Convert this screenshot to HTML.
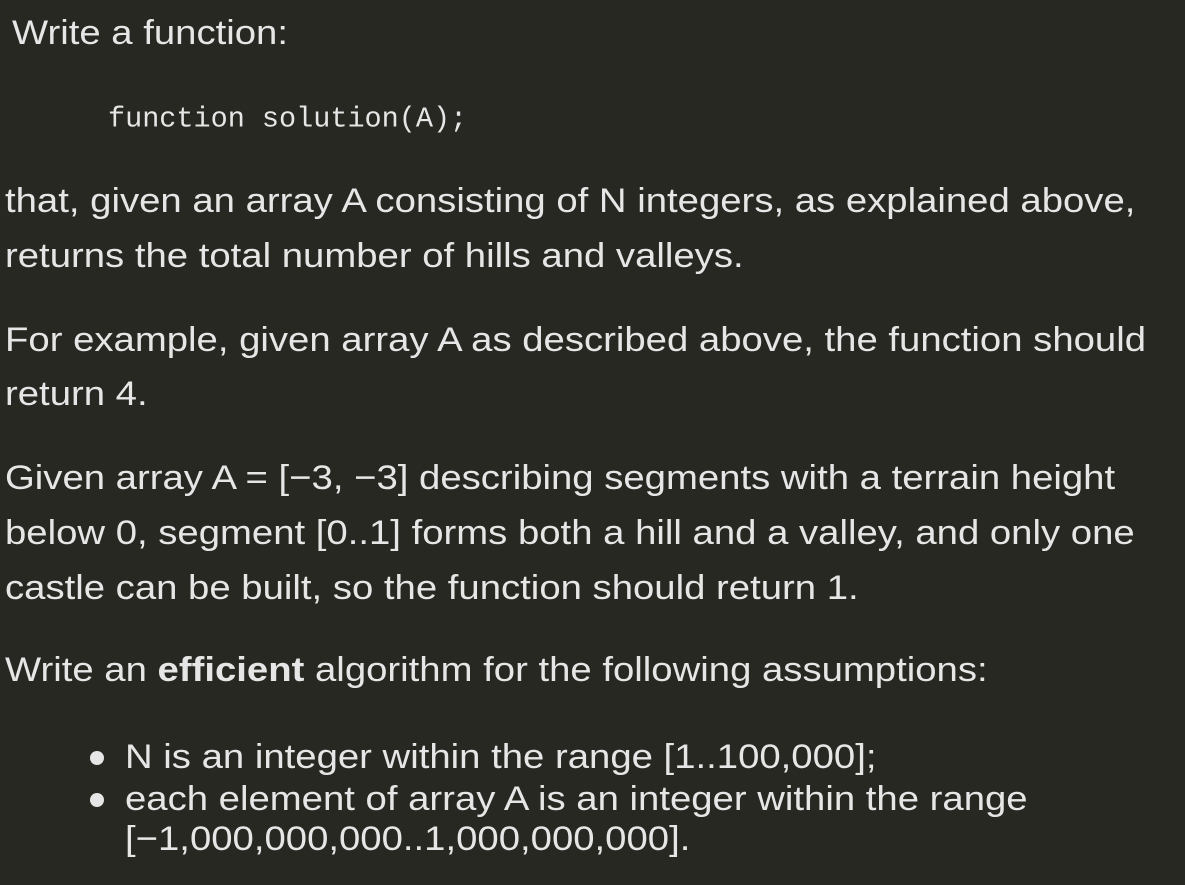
<!DOCTYPE html>
<html><head><meta charset="utf-8"><style>
html,body{margin:0;padding:0;background:#272822;width:1185px;height:885px;overflow:hidden}
.t{position:absolute;white-space:nowrap;font-family:"Liberation Sans",Arial,sans-serif;font-size:34.5px;color:#e6e6e6;line-height:40px;transform:translateY(-50%) scaleX(1.11);transform-origin:left center}
.m{position:absolute;white-space:nowrap;font-family:"Liberation Mono",monospace;font-size:28.5px;color:#e6e6e6;transform:translateY(-50%)}
.d{position:absolute;width:14px;height:14px;border-radius:50%;background:#e6e6e6}
b{font-weight:bold}
</style></head><body>
<div class="t" style="left:12px;top:33px">Write a function:</div>
<div class="m" style="left:108px;top:119px">function solution(A);</div>
<div class="t" style="left:5px;top:201px">that, given an array A consisting of N integers, as explained above,</div>
<div class="t" style="left:5px;top:256px">returns the total number of hills and valleys.</div>
<div class="t" style="left:5px;top:340px">For example, given array A as described above, the function should</div>
<div class="t" style="left:5px;top:394px">return 4.</div>
<div class="t" style="left:5px;top:478px">Given array A = [−3, −3] describing segments with a terrain height</div>
<div class="t" style="left:5px;top:533px">below 0, segment [0..1] forms both a hill and a valley, and only one</div>
<div class="t" style="left:5px;top:588px">castle can be built, so the function should return 1.</div>
<div class="t" style="left:5px;top:670px">Write an <b>efficient</b> algorithm for the following assumptions:</div>
<div class="d" style="left:90px;top:751px"></div>
<div class="t" style="left:125px;top:757px">N is an integer within the range [1..100,000];</div>
<div class="d" style="left:90px;top:793px"></div>
<div class="t" style="left:125px;top:799px">each element of array A is an integer within the range</div>
<div class="t" style="left:125px;top:839px">[−1,000,000,000..1,000,000,000].</div>
</body></html>
